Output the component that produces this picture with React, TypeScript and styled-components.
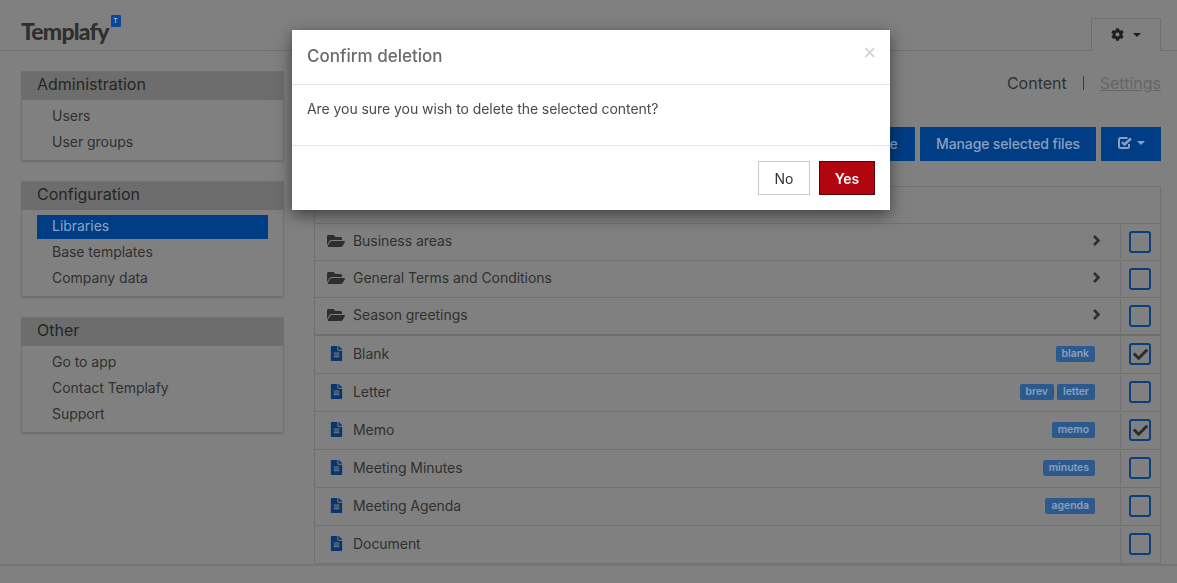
import React from 'react';
import styled, { createGlobalStyle } from 'styled-components';
import { FaCheck, FaCog, FaFileAlt, FaFolderOpen } from 'react-icons/fa';

const GlobalStyle = createGlobalStyle`
    html, body {
        margin: 0;
        height: 583px;
        overflow: hidden;
        background: #808080;
        font-family: Inter, "Liberation Sans", sans-serif;
        color: #343434;
    }
    * { box-sizing: border-box; }
`;

const Page = styled.div`
    height: 583px;
    display: flex;
    flex-direction: column;
`;

const Header = styled.header`
    height: 51px;
    flex: none;
    border-bottom: 1px solid #707070;
    display: flex;
    justify-content: space-between;
    align-items: flex-end;
    padding: 0 16px 0 21px;
`;

const Logo = styled.div`
    display: flex;
    align-items: flex-start;
    align-self: flex-start;
    padding-top: 17px;
`;

const LogoText = styled.span`
    font-family: Lato, sans-serif;
    font-size: 23px;
    line-height: 28px;
    font-weight: 900;
    letter-spacing: -0.8px;
    color: #2f2f2f;
`;

const LogoBadge = styled.span`
    width: 10px;
    height: 12px;
    margin: -2px 0 0 2px;
    border-radius: 1px;
    background: #0a4796;
    color: #9db8d8;
    font-size: 6px;
    font-weight: 700;
    line-height: 12px;
    text-align: center;
`;

const SettingsTab = styled.div`
    width: 70px;
    height: 33px;
    margin-bottom: -1px;
    border: 1px solid #6f6f6f;
    border-bottom: 1px solid #808080;
    display: flex;
    align-items: center;
    justify-content: center;
    gap: 9px;
    color: #1e1e1e;
    font-size: 13px;
`;

const Caret = styled.span<{ $color: string }>`
    width: 0;
    height: 0;
    border-left: 4px solid transparent;
    border-right: 4px solid transparent;
    border-top: 4px solid ${props => props.$color};
`;

const Body = styled.div`
    flex: none;
    height: 515px;
    padding: 20px 16px 0 21px;
    display: flex;
    gap: 30px;
    border-bottom: 2px solid #747474;
`;

const Sidebar = styled.nav`
    width: 263px;
    flex: none;
    display: flex;
    flex-direction: column;
    gap: 20px;
`;

const Panel = styled.section`
    border: 1px solid #717171;
    box-shadow: 0 1px 1px rgba(0, 0, 0, 0.12);
    padding-bottom: 3px;
`;

const PanelTitle = styled.h2`
    margin: 0 0 5px;
    height: 28px;
    padding-left: 15px;
    background: #6d6d6d;
    font-size: 16px;
    font-weight: 400;
    line-height: 25px;
    color: #252525;
`;

const PanelItem = styled.div<{ $active?: boolean }>`
    height: 24px;
    margin: 0 15px 2px;
    padding-left: 15px;
    font-size: 14px;
    line-height: 22px;
    letter-spacing: -0.03px;
    color: ${props => props.$active ? '#8aa5c8' : '#303030'};
    background: ${props => props.$active ? '#003d84' : 'transparent'};
`;

const Main = styled.main`
    flex: 1;
    min-width: 0;
`;

const ViewSwitch = styled.div`
    height: 25px;
    padding-bottom: 1px;
    display: flex;
    justify-content: flex-end;
    align-items: center;
    gap: 16px;
    font-size: 16px;
    color: #303030;
`;

const ViewDivider = styled.span`
    width: 1px;
    height: 14px;
    background: #3c3c3c;
`;

const SettingsLink = styled.span`
    color: #666;
    text-decoration: underline;
`;

const Toolbar = styled.div`
    margin-top: 31px;
    display: flex;
    justify-content: flex-end;
    gap: 5px;
`;

const ToolButton = styled.div<{ $width: number }>`
    width: ${props => props.$width}px;
    height: 34px;
    padding-bottom: 2px;
    background: #003d84;
    color: #8aa0bc;
    font-size: 14px;
    font-weight: 500;
    letter-spacing: -0.14px;
    display: flex;
    align-items: center;
    justify-content: center;
    gap: 4px;
`;

const Table = styled.div`
    margin-top: 25px;
    border: 1px solid #717171;
    border-bottom: 0;
`;

const Row = styled.div<{ $height: number; $thick?: boolean }>`
    height: ${props => props.$height}px;
    display: flex;
    align-items: stretch;
    border-bottom: ${props => props.$thick ? '2px solid #6e6e6e' : '1px solid #717171'};
`;

const NameCell = styled.div<{ $folder?: boolean }>`
    flex: 1;
    min-width: 0;
    padding: 0 17px ${props => props.$folder ? 3 : 2}px 12px;
    display: flex;
    align-items: center;
    font-size: 14px;
    letter-spacing: -0.05px;
    color: #303030;
`;

const IconSlot = styled.span<{ $color: string }>`
    width: 26px;
    flex: none;
    display: flex;
    justify-content: center;
    padding-right: 8px;
    color: ${props => props.$color};
`;

const Name = styled.span`
    flex: 1;
`;

const Tags = styled.span`
    display: flex;
    gap: 3px;
    margin-right: 8px;
`;

const Tag = styled.span`
    height: 16px;
    padding: 0 6px;
    border-radius: 2px;
    background: #2c5a8e;
    color: #8aa0bc;
    font-size: 10.5px;
    font-weight: 600;
    line-height: 16px;
`;

const Chevron = styled.svg`
    width: 9px;
    height: 11px;
    margin-right: 2px;
`;

const CheckCell = styled.div`
    width: 40px;
    flex: none;
    margin: 1px 0;
    padding: 0 1px 1px 0;
    border-left: 1px solid #717171;
    display: flex;
    align-items: center;
    justify-content: center;
`;

const Checkbox = styled.span`
    width: 22px;
    height: 22px;
    border: 2px solid #0a3f7c;
    border-radius: 3px;
    display: flex;
    align-items: center;
    justify-content: center;
    color: #2c2c2c;
    font-size: 15px;
`;

const Backdrop = styled.div`
    position: fixed;
    inset: 0;
    padding: 30px 0 0 292px;
`;

const Modal = styled.div`
    width: 598px;
    height: 180px;
    background: #fff;
    box-shadow: 0 5px 15px rgba(0, 0, 0, 0.5);
    display: flex;
    flex-direction: column;
`;

const ModalHeader = styled.div`
    height: 55px;
    flex: none;
    padding: 0 15px 2px;
    border-bottom: 1px solid #e5e5e5;
    display: flex;
    align-items: center;
    justify-content: space-between;
`;

const ModalTitle = styled.h4`
    margin: 0;
    font-size: 17px;
    font-weight: 500;
    color: #6a6a6a;
`;

const CloseButton = styled.span`
    font-family: "Liberation Sans", sans-serif;
    font-size: 22px;
    font-weight: 400;
    line-height: 1;
    color: #cfcfcf;
    margin: -7px -1px 0 0;
`;

const ModalBody = styled.div`
    height: 61px;
    flex: none;
    padding: 14px 15px;
    border-bottom: 1px solid #e5e5e5;
    font-size: 14px;
    line-height: 20px;
    letter-spacing: -0.06px;
    color: #4a4a4a;
`;

const ModalFooter = styled.div`
    flex: 1;
    padding: 15px;
    display: flex;
    justify-content: flex-end;
    gap: 9px;
`;

const ModalButton = styled.div<{ $primary?: boolean }>`
    width: ${props => props.$primary ? 56 : 52}px;
    height: 34px;
    border: 1px solid ${props => props.$primary ? '#5a0008' : '#ccc'};
    background: ${props => props.$primary ? '#b1060f' : '#fff'};
    color: ${props => props.$primary ? '#fff' : '#333'};
    font-size: 14px;
    font-weight: ${props => props.$primary ? 600 : 400};
    display: flex;
    align-items: center;
    justify-content: center;
`;

const panels = [
    { title: 'Administration', items: ['Users', 'User groups'] },
    { title: 'Configuration', items: ['Libraries', 'Base templates', 'Company data'] },
    { title: 'Other', items: ['Go to app', 'Contact Templafy', 'Support'] },
];

const folders = ['Business areas', 'General Terms and Conditions', 'Season greetings'];

const files: Array<{ name: string, tags: string[], checked?: boolean }> = [
    { name: 'Blank', tags: ['blank'], checked: true },
    { name: 'Letter', tags: ['brev', 'letter'] },
    { name: 'Memo', tags: ['memo'], checked: true },
    { name: 'Meeting Minutes', tags: ['minutes'] },
    { name: 'Meeting Agenda', tags: ['agenda'] },
    { name: 'Document', tags: [] },
];

const CheckMenuIcon: React.FC = () => (
    <svg width="15" height="14" viewBox="0 0 15 14" fill="none" stroke="#8aa0bc" strokeWidth="2">
        <path d="M11 8v2.500a1.500 1.500 0 0 1-1.500 1.500h-7A1.500 1.500 0 0 1 1 10.500v-7A1.500 1.500 0 0 1 2.500 2h7" />
        <path d="M4 6l2.500 2.500L13 2.500" strokeWidth="2.400" />
    </svg>
);

export default function App() {
    return (
        <>
            <GlobalStyle />
            <Page>
                <Header>
                    <Logo>
                        <LogoText>Templafy</LogoText>
                        <LogoBadge>T</LogoBadge>
                    </Logo>
                    <SettingsTab>
                        <FaCog />
                        <Caret $color="#1e1e1e" />
                    </SettingsTab>
                </Header>
                <Body>
                    <Sidebar>
                        {panels.map((panel) => (
                            <Panel key={panel.title}>
                                <PanelTitle>{panel.title}</PanelTitle>
                                {panel.items.map((item) => (
                                    <PanelItem key={item} $active={item === 'Libraries'}>{item}</PanelItem>
                                ))}
                            </Panel>
                        ))}
                    </Sidebar>
                    <Main>
                        <ViewSwitch>
                            <span>Content</span>
                            <ViewDivider />
                            <SettingsLink>Settings</SettingsLink>
                        </ViewSwitch>
                        <Toolbar>
                            <ToolButton $width={77}>Delete</ToolButton>
                            <ToolButton $width={176}>Manage selected files</ToolButton>
                            <ToolButton $width={60}>
                                <CheckMenuIcon />
                                <Caret $color="#8aa0bc" />
                            </ToolButton>
                        </Toolbar>
                        <Table>
                            <Row $height={37} />
                            {folders.map((name, i) => (
                                <Row key={name} $height={i === 2 ? 38 : 37} $thick={i === 2}>
                                    <NameCell $folder>
                                        <IconSlot $color="#2e2e2e"><FaFolderOpen size={18} /></IconSlot>
                                        <Name>{name}</Name>
                                        <Chevron viewBox="0 0 9 11" fill="none" stroke="#2e2e2e" strokeWidth="2.600">
                                            <path d="M2 1l4.500 4.500L2 10" />
                                        </Chevron>
                                    </NameCell>
                                    <CheckCell><Checkbox /></CheckCell>
                                </Row>
                            ))}
                            {files.map((file) => (
                                <Row key={file.name} $height={38}>
                                    <NameCell>
                                        <IconSlot $color="#083670"><FaFileAlt size={15} /></IconSlot>
                                        <Name>{file.name}</Name>
                                        <Tags>
                                            {file.tags.map((tag) => <Tag key={tag}>{tag}</Tag>)}
                                        </Tags>
                                    </NameCell>
                                    <CheckCell>
                                        <Checkbox>{file.checked && <FaCheck />}</Checkbox>
                                    </CheckCell>
                                </Row>
                            ))}
                        </Table>
                    </Main>
                </Body>
            </Page>
            <Backdrop>
                <Modal>
                    <ModalHeader>
                        <ModalTitle>Confirm deletion</ModalTitle>
                        <CloseButton>×</CloseButton>
                    </ModalHeader>
                    <ModalBody>Are you sure you wish to delete the selected content?</ModalBody>
                    <ModalFooter>
                        <ModalButton>No</ModalButton>
                        <ModalButton $primary>Yes</ModalButton>
                    </ModalFooter>
                </Modal>
            </Backdrop>
        </>
    );
}
